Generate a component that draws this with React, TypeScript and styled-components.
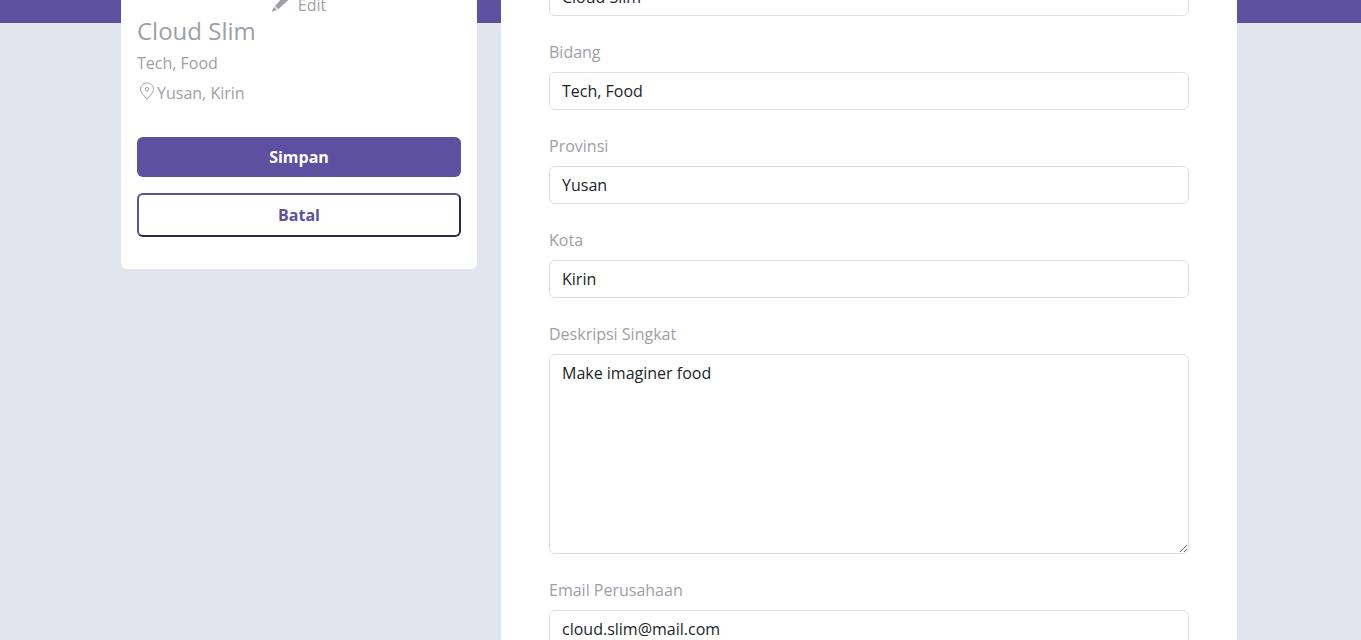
import React from "react";
import styled, { createGlobalStyle } from "styled-components";

const purple = "#5e50a1";
const muted = "#9ea0a5";

const GlobalStyle = createGlobalStyle`
  *, *::before, *::after { box-sizing: border-box; }
  body {
    margin: 0;
    background: #e2e5ed;
    color: #212529;
    font-family: "Open Sans", sans-serif;
    font-size: 16px;
    line-height: 24px;
  }
`;

const Page = styled.main`
  height: 100vh;
  overflow: hidden;
  padding-right: 3px;
  background: linear-gradient(${purple}, ${purple}) top / 100% 23px no-repeat #e2e5ed;
`;

const Container = styled.div`
  display: grid;
  grid-template-columns: minmax(0, 1fr) minmax(0, 2fr);
  align-items: start;
  width: 100%;
  max-width: 1140px;
  margin: 0 auto;
`;

const Column = styled.div`
  padding: 0 12px;
`;

const ProfileCard = styled.aside`
  margin-top: -7px;
  padding: 0 16px 32px;
  background: #fff;
  border-radius: 0 0 6px 6px;
`;

const EditButton = styled.button`
  display: flex;
  justify-content: center;
  gap: 10px;
  width: 100%;
  height: 24px;
  padding: 0;
  border: 0;
  background: none;
  color: ${muted};
  font: inherit;
`;

const Name = styled.h1`
  margin: 0 0 6px;
  color: ${muted};
  font-size: 24px;
  font-weight: 500;
  line-height: 28px;
`;

const Field = styled.p`
  margin: 0 0 6px;
  color: ${muted};
  font-weight: 500;
`;

const Place = styled.p`
  display: flex;
  margin: 0 0 32px;
  color: ${muted};
`;

const Actions = styled.div`
  display: grid;
  gap: 16px;
`;

const ActionButton = styled.button<{ $outlined?: boolean }>`
  padding: 8px 16px;
  border: ${(p) => (p.$outlined ? `2px outset ${purple}` : "0")};
  border-radius: 6px;
  background: ${(p) => (p.$outlined ? "#fff" : purple)};
  color: ${(p) => (p.$outlined ? purple : "#fff")};
  font: inherit;
  font-weight: 700;
`;

const FormPanel = styled.form`
  display: grid;
  gap: 24px;
  margin-top: -22px;
  padding: 0 48px 48px;
  background: #fff;
`;

const Group = styled.div`
  display: grid;
  gap: 8px;
`;

const Label = styled.label`
  color: ${muted};
`;

const Input = styled.input`
  display: block;
  width: 100%;
  height: 38px;
  padding: 6px 12px;
  border: 1px solid #dedfe2;
  border-radius: 6px;
  background: #fff;
  color: #212529;
  font: inherit;
`;

const TextArea = styled(Input).attrs({ as: "textarea" })`
  height: 200px;
  resize: vertical;
`;

const PencilIcon = () => (
  <svg width="16" height="20" viewBox="0 0 16 20" fill="currentColor" aria-hidden="true">
    <path d="M-0.4 18.5 L2.2 13.7 L5 17 Z M3 12.9 L9.2 6 L14.2 9 L6.2 16.2 Z M9.2 6 L11.4 4 Q12.2 3.4 13 4 L16 6.4 Q16.4 7 15.8 7.6 L14.2 9 Z" />
  </svg>
);

const PinIcon = () => (
  <svg width="20" height="20" viewBox="0 0 20 20" fill="none" stroke="currentColor" aria-hidden="true">
    <path d="M10 18.3 C8.5 15.8 3.5 12 3.5 8.3 C3.5 4.5 6.3 2 10 2 C13.7 2 16.5 4.5 16.5 8.3 C16.5 12 11.5 15.8 10 18.3 Z" />
    <circle cx="10" cy="8.2" r="1.7" />
  </svg>
);

const fields = [
  { id: "bidang", label: "Bidang", value: "Tech, Food" },
  { id: "provinsi", label: "Provinsi", value: "Yusan" },
  { id: "kota", label: "Kota", value: "Kirin" },
  { id: "deskripsi", label: "Deskripsi Singkat", value: "Make imaginer food", multiline: true },
  { id: "email", label: "Email Perusahaan", value: "cloud.slim@mail.com" },
];

export default function App() {
  return (
    <>
      <GlobalStyle />
      <Page>
        <Container>
          <Column>
            <ProfileCard>
              <EditButton type="button">
                <PencilIcon />
                Edit
              </EditButton>
              <Name>Cloud Slim</Name>
              <Field>Tech, Food</Field>
              <Place>
                <PinIcon />
                Yusan, Kirin
              </Place>
              <Actions>
                <ActionButton type="submit" form="company">Simpan</ActionButton>
                <ActionButton type="button" $outlined>Batal</ActionButton>
              </Actions>
            </ProfileCard>
          </Column>
          <Column>
            <FormPanel id="company" onSubmit={(e) => e.preventDefault()}>
              <Input name="nama" aria-label="Nama Perusahaan" defaultValue="Cloud Slim" />
              {fields.map((f) => (
                <Group key={f.id}>
                  <Label htmlFor={f.id}>{f.label}</Label>
                  {f.multiline ? (
                    <TextArea id={f.id} defaultValue={f.value} />
                  ) : (
                    <Input id={f.id} defaultValue={f.value} />
                  )}
                </Group>
              ))}
            </FormPanel>
          </Column>
        </Container>
      </Page>
    </>
  );
}
